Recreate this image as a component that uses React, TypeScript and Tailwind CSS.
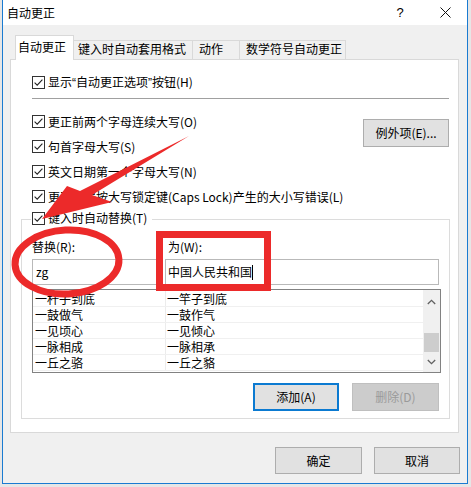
import React from 'react'

const Check = () => (
  <span className="w-[13px] h-[13px] border border-[#333333] bg-white flex items-center justify-center shrink-0">
    <svg width="11" height="11" viewBox="0 0 11 11">
      <path d="M1.6 5.6 L4.2 8.2 L9.4 2.6" stroke="#222222" strokeWidth="1.1" fill="none" />
    </svg>
  </span>
)

const Row = ({ children }: { children: React.ReactNode }) => (
  <div className="h-[25px] flex items-center gap-[3px]">
    <Check />
    <span className="leading-[16px] whitespace-nowrap">{children}</span>
  </div>
)

const pairs = [
  ['一杆子到底', '一竿子到底'],
  ['一鼓做气', '一鼓作气'],
  ['一见顷心', '一见倾心'],
  ['一脉相成', '一脉相承'],
  ['一丘之骆', '一丘之貉'],
]

export default function App() {
  return (
    <div className="w-[471px] h-[487px] bg-[#e6e6e6] relative overflow-hidden pl-[2px] [font-family:'Noto_Sans_CJK_SC',sans-serif] text-[12px] text-black">
      <div className="w-[466px] h-[484px] border-x border-b border-[#1a7bd1] bg-[#f0f0f0] flex flex-col">
        {/* 标题栏 */}
        <div className="h-[25px] bg-white flex items-center pl-[4px] pr-[16px] shrink-0">
          <span className="leading-[16px]">自动更正</span>
          <span className="ml-auto w-[12px] text-center leading-[16px] text-[13px] [font-family:'Liberation_Sans',sans-serif]">?</span>
          <svg className="ml-[34px]" width="11" height="11" viewBox="0 0 11 11">
            <path d="M0.5 0.5 L10.5 10.5 M10.5 0.5 L0.5 10.5" stroke="#111111" strokeWidth="1" />
          </svg>
        </div>

        <div className="flex flex-col pl-[7px] pr-[8px] pt-[10px]">
          {/* 选项卡 */}
          <div className="h-[25px] flex items-end ml-[5px]">
            <div className="relative z-10 h-[25px] w-[59px] bg-white border-x border-t border-[#d9d9d9] pl-[2px] pt-[3px] leading-[16px]">
              自动更正
            </div>
            <div className="h-[20px] w-[120px] -ml-px bg-[#f0f0f0] border-x border-t border-[#d9d9d9] pl-[4px] leading-[16px]">
              键入时自动套用格式
            </div>
            <div className="h-[20px] w-[48px] -ml-px bg-[#f0f0f0] border-x border-t border-[#d9d9d9] pl-[6px] leading-[16px]">
              动作
            </div>
            <div className="h-[20px] w-[107px] -ml-px bg-[#f0f0f0] border-x border-t border-[#d9d9d9] pl-[6px] leading-[16px]">
              数学符号自动更正
            </div>
          </div>

          {/* 面板 */}
          <div className="-mt-px w-[449px] h-[374px] bg-white border border-[#d9d9d9] flex flex-col pl-[21px] pr-[9px] pt-[14px]">
            <div className="h-[16px] flex items-center gap-[3px]">
              <Check />
              <span className="leading-[16px] whitespace-nowrap">
                显示<span className="[font-family:'Liberation_Sans',sans-serif]">“</span>自动更正选项<span className="[font-family:'Liberation_Sans',sans-serif]">”</span>按钮(H)
              </span>
            </div>
            <div className="mt-[8px] h-px bg-[#a0a0a0]" />

            <div className="mt-[10px] flex">
              <div className="flex flex-col">
                <Row>更正前两个字母连续大写(O)</Row>
                <Row>句首字母大写(S)</Row>
                <Row>英文日期第一个字母大写(N)</Row>
                <Row>更正因误按大写锁定键(Caps Lock)产生的大小写错误(L)</Row>
              </div>
              <button className="ml-auto mt-[10px] w-[86px] h-[28px] bg-[#e1e1e1] border border-[#adadad] flex items-center justify-center leading-[16px]">
                例外项(E)...
              </button>
            </div>

            {/* 键入时自动替换 */}
            <div className="mt-[10px] -ml-[11px] -mr-px border border-[#dcdcdc] flex flex-col pl-[10px] pr-[8px] pb-[7px]">
              <div className="-mt-[10px] -ml-[1px] w-fit bg-white pl-[1px] pr-[5px] h-[16px] flex items-center gap-[3px]">
                <Check />
                <span className="leading-[16px]">键入时自动替换(T)</span>
              </div>

              <div className="mt-[13px] h-[16px] flex leading-[16px]">
                <span className="w-[136px]">替换(R):</span>
                <span>为(W):</span>
              </div>

              <div className="mt-[4px] flex">
                <div className="w-[129px] h-[26px] border border-[#b9b9b9] flex items-center pl-[3px] leading-[16px]">
                  zg
                </div>
                <div className="ml-[4px] w-[274px] h-[26px] border border-[#b9b9b9] flex items-center pl-[2px] leading-[16px]">
                  中国人民共和国
                  <span className="w-px h-[15px] bg-black" />
                </div>
              </div>

              <div className="mt-[4px] h-[84px] border border-[#828282] flex">
                <div className="flex-1 flex flex-col pt-px">
                  {pairs.map(([a, b]) => (
                    <div key={a} className="h-[16px] flex border-b border-[#f0f0f0] leading-[15px]">
                      <span className="w-[133px] pl-[2px] border-r border-[#ececec]">{a}</span>
                      <span className="pl-[1px]">{b}</span>
                    </div>
                  ))}
                </div>
                <div className="w-[17px] bg-[#f0f0f0] flex flex-col">
                  <div className="h-[24px] flex items-center justify-center">
                    <svg width="9" height="6" viewBox="0 0 9 6">
                      <path d="M0.8 5 L4.5 1.3 L8.2 5" stroke="#606060" strokeWidth="1.3" fill="none" />
                    </svg>
                  </div>
                  <div className="h-[19px]" />
                  <div className="h-[19px] mx-[1px] bg-[#cdcdcd]" />
                  <div className="flex-1 flex items-center justify-center">
                    <svg width="9" height="6" viewBox="0 0 9 6">
                      <path d="M0.8 1 L4.5 4.7 L8.2 1" stroke="#606060" strokeWidth="1.3" fill="none" />
                    </svg>
                  </div>
                </div>
              </div>

              <div className="mt-[10px] flex justify-end gap-[13px] mr-[2px]">
                <button className="w-[86px] h-[28px] bg-[#e1e1e1] border-2 border-[#0b7ad1] flex items-center justify-center leading-[16px]">
                  添加(A)
                </button>
                <button className="w-[87px] h-[28px] bg-[#cccccc] border border-[#bfbfbf] text-[#9a9a9a] flex items-center justify-center leading-[16px]">
                  删除(D)
                </button>
              </div>
            </div>
          </div>

          {/* 底部按钮 */}
          <div className="mt-[14px] flex justify-end gap-[12px] -mr-px">
            <button className="w-[87px] h-[27px] bg-[#e1e1e1] border border-[#adadad] flex items-center justify-center leading-[16px]">
              确定
            </button>
            <button className="w-[86px] h-[27px] bg-[#e1e1e1] border border-[#adadad] flex items-center justify-center leading-[16px]">
              取消
            </button>
          </div>
        </div>
      </div>

      {/* 红色标注 */}
      <svg className="absolute top-0 left-0 pointer-events-none" width="471" height="487" viewBox="0 0 471 487">
        <ellipse cx="67" cy="262" rx="52" ry="32" transform="rotate(-3 67 262)" fill="none" stroke="#ec2a2a" strokeWidth="7" />
        <rect x="159.5" y="234.5" width="108" height="53" fill="none" stroke="#ec2a2a" strokeWidth="7" />
        <polygon points="42,219 67,186 80,191 189,136 92,195 112,202" fill="#ec2a2a" />
      </svg>
    </div>
  )
}
